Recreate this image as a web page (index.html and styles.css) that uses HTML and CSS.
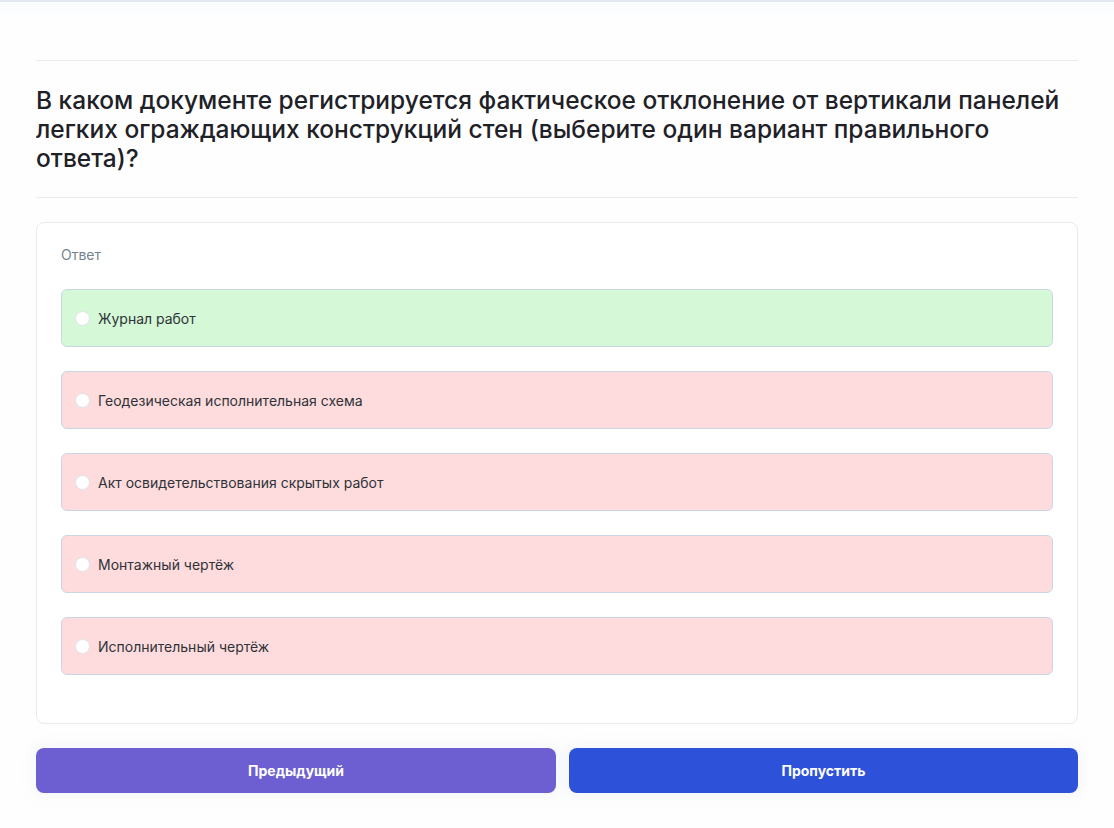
FILE: index.html
```html
<!DOCTYPE html>
<html lang="ru">
<head>
<meta charset="utf-8">
<title>Тест</title>
<link rel="stylesheet" href="styles.css">
</head>
<body>
<div class="topband"></div>
<main class="page">
  <hr class="divider first">
  <h1 class="question">В каком документе регистрируется фактическое отклонение от вертикали панелей легких ограждающих конструкций стен (выберите один вариант правильного ответа)?</h1>
  <hr class="divider">
  <section class="card">
    <div class="label">Ответ</div>
    <div class="options">
      <label class="option correct"><span class="radio"></span><span class="otext">Журнал работ</span></label>
      <label class="option wrong"><span class="radio"></span><span class="otext">Геодезическая исполнительная схема</span></label>
      <label class="option wrong"><span class="radio"></span><span class="otext">Акт освидетельствования скрытых работ</span></label>
      <label class="option wrong"><span class="radio"></span><span class="otext">Монтажный чертёж</span></label>
      <label class="option wrong"><span class="radio"></span><span class="otext">Исполнительный чертёж</span></label>
    </div>
  </section>
  <div class="buttons">
    <button class="btn prev">Предыдущий</button>
    <button class="btn skip">Пропустить</button>
  </div>
</main>
</body>
</html>
```
FILE: styles.css
```css
html, body {
  margin: 0;
  padding: 0;
}
body {
  background: #fefefe;
  font-family: Inter, "Noto Sans", sans-serif;
  color: #1f2328;
  border-top: 2px solid #e3e9f1;
  min-height: 826px;
}
.topband {
  height: 11px;
  background: #fbfcfd;
}
.page {
  margin: 0 36px;
  display: flex;
  flex-direction: column;
}
.divider {
  border: 0;
  border-top: 1px solid #eaecef;
  margin: 0;
}
.divider.first {
  margin-top: 47px;
}
.question {
  font-size: 24.5px;
  font-weight: 450;
  line-height: 29px;
  margin: 25px 0 24px;
  color: #1e2127;
}
.card {
  margin-top: 24px;
  border: 1px solid #e8eaee;
  border-radius: 8px;
  background: #fff;
  padding: 22px 24px 24px;
}
.label {
  font-size: 14px;
  line-height: 20px;
  color: #75838f;
}
.options {
  margin-top: 24px;
  display: flex;
  flex-direction: column;
  gap: 24px;
  padding-bottom: 24px;
}
.option {
  display: flex;
  align-items: center;
  gap: 8px;
  height: 56px;
  padding: 0 13px;
  border: 1px solid #c8d6e6;
  border-radius: 6px;
  font-size: 14px;
  color: #2f3338;
}
.option.correct { background: #d5f8d7; }
.option.wrong { background: #fedcde; }
.radio {
  width: 13px;
  height: 13px;
  border-radius: 50%;
  background: #fff;
  border: 1px solid #dfe3e8;
  flex: none;
}
.buttons {
  margin-top: 24px;
  display: grid;
  grid-template-columns: 520px 1fr;
  gap: 13px;
}
.btn {
  height: 45px;
  border: 0;
  border-radius: 8px;
  color: #fff;
  font-family: Inter, "Noto Sans", sans-serif;
  font-weight: 700;
  font-size: 14px;
  box-shadow: 0 0 10px 4px rgba(240, 242, 246, 0.5);
}
.btn.prev { background: #6d5fd2; }
.btn.skip { background: #2e51da; }
```
